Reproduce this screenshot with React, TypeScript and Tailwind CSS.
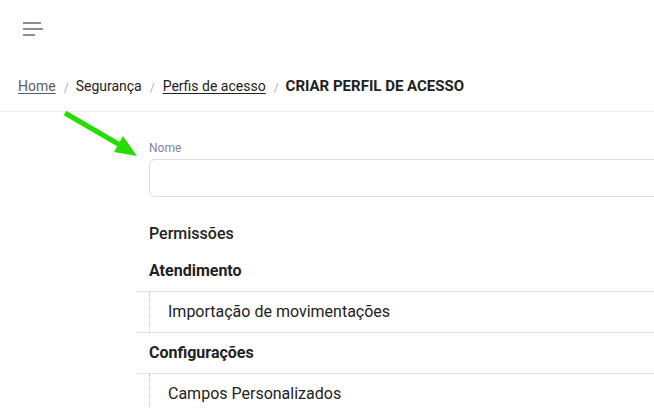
import React from "react";

export default function App() {
  return (
    <div className="relative w-[654px] h-[408px] overflow-hidden bg-white font-['Roboto',sans-serif] text-[#212529]">
      {/* top bar */}
      <div className="h-[56px] flex items-center pl-[23px]">
        <div className="flex flex-col gap-[4px] pt-[1px]">
          <div className="w-[18px] h-[2px] bg-[#8a8c9c]" />
          <div className="w-[20px] h-[2px] bg-[#8a8c9c]" />
          <div className="w-[12px] h-[2px] bg-[#8a8c9c]" />
        </div>
      </div>

      {/* breadcrumb */}
      <div className="h-[56px] flex items-center pl-[18px] border-b border-[#ececec] text-[14px] pt-[6px]">
        <span className="underline text-[#5b5e6a] underline-offset-[2px]">Home</span>
        <span className="ml-[8px] mr-[7px] text-[#b0b0b0] text-[12px] mt-[3px]">/</span>
        <span className="text-[#222]">Segurança</span>
        <span className="mx-[8px] text-[#b0b0b0] text-[12px] mt-[3px]">/</span>
        <span className="underline text-[#222] underline-offset-[2px]">Perfis de acesso</span>
        <span className="ml-[8px] mr-[7px] text-[#b0b0b0] text-[12px] mt-[3px]">/</span>
        <span className="font-bold text-[15px] text-[#222]">CRIAR PERFIL DE ACESSO</span>
      </div>

      {/* content */}
      <div className="pl-[137px] pt-[28px]">
        <div className="pl-[12px]">
          <div className="text-[12px] leading-[16px] text-[#80869a] mb-[3px]">Nome</div>
          <div className="h-[38px] w-[540px] rounded-[6px] border border-[#dcdde2]" />
        </div>

        <div className="pl-[12px] mt-[25px] text-[16px] leading-[24px] font-medium text-[#222]">Permissões</div>

        <div className="mt-[5px]">
          <div className="h-[40px] flex items-center pl-[12px] text-[16px] font-bold text-[#222]">Atendimento</div>
          <div className="border-t border-[#e2e2e2] h-[41px] flex items-stretch">
            <div className="ml-[12px] border-l border-dotted border-[#c4c4c4]" />
            <div className="flex items-center pl-[18px] text-[16px] text-[#222]">Importação de movimentações</div>
          </div>
          <div className="border-t border-[#e2e2e2] h-[41px] flex items-center pl-[12px] text-[16px] font-bold text-[#222]">Configurações</div>
          <div className="border-t border-[#e2e2e2] h-[41px] flex items-stretch">
            <div className="ml-[12px] border-l border-dotted border-[#c4c4c4]" />
            <div className="flex items-center pl-[18px] text-[16px] text-[#222]">Campos Personalizados</div>
          </div>
        </div>
      </div>

      {/* green arrow annotation */}
      <svg className="absolute left-0 top-0 pointer-events-none" width="654" height="408">
        <line x1="65" y1="113" x2="120" y2="145" stroke="#26dd00" strokeWidth="5" />
        <polygon points="123,136 114,152 137,156" fill="#26dd00" />
      </svg>
    </div>
  );
}
